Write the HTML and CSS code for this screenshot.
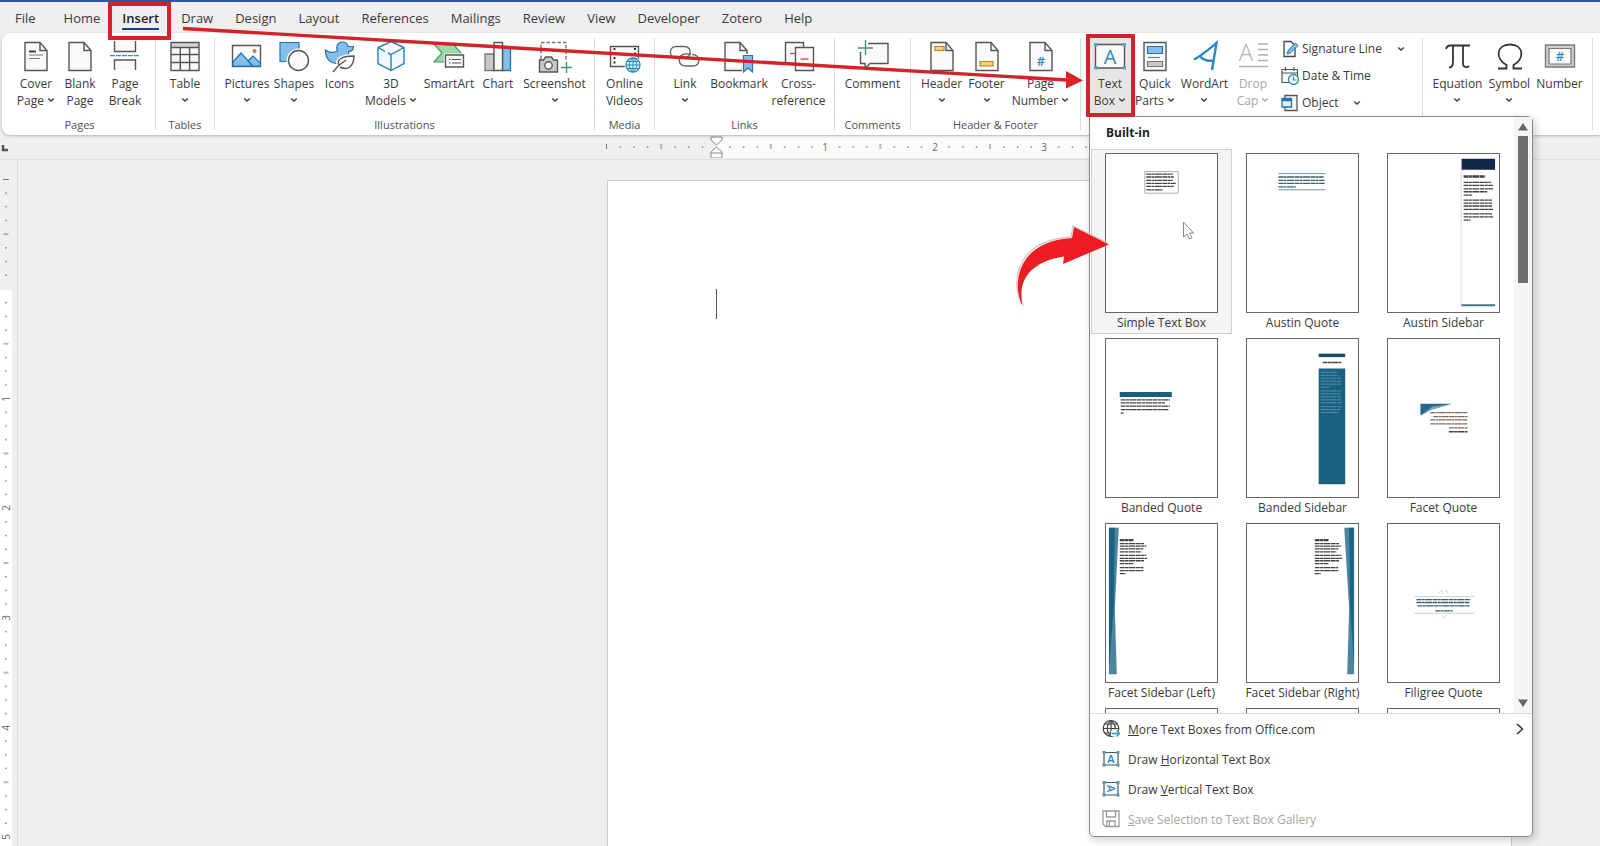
FILE: index.html
```
<!DOCTYPE html>
<html lang="en">
<head>
  <meta charset="utf-8">
  <title>Document</title>
  <link rel="stylesheet" href="styles.css">
</head>
<body>
  <svg class="defs" aria-hidden="true">
    <symbol id="chev" viewBox="0 0 8 6"><path d="M1.2 1.4l2.8 2.6 2.8-2.6" fill="none" stroke="currentColor" stroke-width="1.3"/></symbol>
    <symbol id="doc" viewBox="0 0 32 32"><path d="M5 2.5h15l7 8v20H5z" fill="#fafafa" stroke="#555" stroke-width="1.4"/><path d="M20 2.5v8h7" fill="none" stroke="#555" stroke-width="1.4"/></symbol>
    <pattern id="ticks-x" x="606.4" y="0" width="109.6" height="22" patternUnits="userSpaceOnUse">
      <path d="M54.8 8v5" stroke="#777"/>
      <path d="M13.2 11h1.4M26.9 11h1.4M40.6 11h1.4M68 11h1.4M81.7 11h1.4M95.4 11h1.4" stroke="#777" stroke-width="1.4"/>
    </pattern>
    <pattern id="ticks-y" x="0" y="19.4" width="12" height="109.6" patternUnits="userSpaceOnUse">
      <path d="M3.5 54.8h5" stroke="#777"/>
      <path d="M6 13v1.4M6 26.7v1.4M6 40.4v1.4M6 67.8v1.4M6 81.5v1.4M6 95.2v1.4" stroke="#777" stroke-width="1.4"/>
    </pattern>
  </svg>

  <nav class="tabs">
    <button class="tab file">File</button>
    <button class="tab">Home</button>
    <button class="tab active">Insert</button>
    <button class="tab">Draw</button>
    <button class="tab">Design</button>
    <button class="tab">Layout</button>
    <button class="tab">References</button>
    <button class="tab">Mailings</button>
    <button class="tab">Review</button>
    <button class="tab">View</button>
    <button class="tab">Developer</button>
    <button class="tab">Zotero</button>
    <button class="tab">Help</button>
  </nav>

  <div class="ribbon">
    <section class="group pages">
      <div class="tools">
        <button class="tool">
          <svg class="icon" viewBox="0 0 32 32"><use href="#doc"/><path d="M9 11.5h7" stroke="#444" stroke-width="2"/><path d="M9 15h14M9 18.5h11" stroke="#777" stroke-width="1.2"/></svg>
          <span>Cover<br>Page <svg class="chev"><use href="#chev"/></svg></span>
        </button>
        <button class="tool">
          <svg class="icon" viewBox="0 0 32 32"><use href="#doc"/></svg>
          <span>Blank<br>Page</span>
        </button>
        <button class="tool">
          <svg class="icon" viewBox="0 0 32 32"><path d="M5.5 1v10.5h21V1M5.5 30V20h21v10" fill="#fafafa" stroke="#555" stroke-width="1.4"/><path d="M1 15.7h30" stroke="#2f8fc0" stroke-width="1.3" stroke-dasharray="5 1"/></svg>
          <span>Page<br>Break</span>
        </button>
      </div>
      <div class="group-name">Pages</div>
    </section>

    <section class="group tables">
      <div class="tools">
        <button class="tool">
          <svg class="icon" viewBox="0 0 32 32"><path d="M2 2.5h28v28H2z" fill="#fafafa"/><path d="M2 2.5h28v5H2z" fill="#d4d4d4"/><path d="M2 2.5h28v28H2zM2 7.500h28M2 14.500h28M2 22.500h28M11.300 7.500v23M20.600 7.500v23" fill="none" stroke="#555" stroke-width="1.4"/></svg>
          <span>Table<br><svg class="chev"><use href="#chev"/></svg></span>
        </button>
      </div>
      <div class="group-name">Tables</div>
    </section>

    <section class="group illustrations">
      <div class="tools">
        <button class="tool">
          <svg class="icon" viewBox="0 0 32 32"><path d="M1.500 5.500h28v21h-28z" fill="#fafafa" stroke="#555" stroke-width="1.4"/><path d="M2 22l8-9 12 13.200H2zM17 21l5-5 7.300 7v3.200h-8z" fill="#83beec" stroke="#2573ab" stroke-width="1.2"/><circle cx="23.5" cy="11" r="2" fill="#d9782d"/></svg>
          <span>Pictures<br><svg class="chev"><use href="#chev"/></svg></span>
        </button>
        <button class="tool">
          <svg class="icon" viewBox="0 0 32 32"><path d="M2 2.500h19v19H2z" fill="#83beec" stroke="#2573ab" stroke-width="1.2"/><circle cx="20.5" cy="20.5" r="12" fill="#fff"/><circle cx="20.5" cy="20.5" r="10" fill="#fafafa" stroke="#555" stroke-width="1.4"/></svg>
          <span>Shapes<br><svg class="chev"><use href="#chev"/></svg></span>
        </button>
        <button class="tool">
          <svg class="icon" viewBox="0 0 32 32"><path d="M1.500 10c4 3 8 3 12 1-2-4 0-9 5-9 3 0 5 2 5.500 4.500h5.500c0 3-2 5-5 5 1 7-3 12-11 12-8 0-12-5-12-13.500z" fill="#83beec" stroke="#2573ab" stroke-width="1.2"/><path d="M15 25c-3-6 4-9 15-9 0 10-6 15-14 11" fill="#fff" stroke="#fff" stroke-width="4"/><path d="M9 32l6-7c-3-6 4-9 15-9 0 10-6 15-14 11M14 26l8-6" fill="#fff" stroke="#555" stroke-width="1.4"/></svg>
          <span>Icons</span>
        </button>
        <button class="tool">
          <svg class="icon" viewBox="0 0 32 32"><path d="M16 1.500l13 6v16l-13 7-13-7v-16z" fill="#f1fafd" stroke="#2b7fae" stroke-width="1.4"/><path d="M3 7.500l7 4M13 13l3 1.500 13-7M16 14.500v16" fill="none" stroke="#2b7fae" stroke-width="1.4"/></svg>
          <span>3D<br>Models <svg class="chev"><use href="#chev"/></svg></span>
        </button>
        <button class="tool">
          <svg class="icon" viewBox="0 0 32 32"><path d="M1 4h19l8 9-8 9H1l8-9z" fill="#98dba8" stroke="#4a9a61" stroke-width="1.2"/><path d="M11 13.500h21v15H11z" fill="#fff"/><path d="M12.500 15h18v12h-18z" fill="#fafafa" stroke="#555" stroke-width="1.4"/><path d="M16 19.500h1.500M19 19.500h9M16 23h1.500M19 23h9" stroke="#555" stroke-width="1.2"/></svg>
          <span>SmartArt</span>
        </button>
        <button class="tool">
          <svg class="icon" viewBox="0 0 32 32"><path d="M3 14h9v16.500H3z" fill="#c8c8c8" stroke="#777" stroke-width="1.3"/><path d="M20.500 8h8v22.500h-8z" fill="#83beec" stroke="#2573ab" stroke-width="1.3"/><path d="M12 2.500h8.500v28H12z" fill="#fafafa" stroke="#555" stroke-width="1.4"/></svg>
          <span>Chart</span>
        </button>
        <button class="tool">
          <svg class="icon wide" viewBox="0 0 36 32"><path d="M4 19V2.500h25V20" fill="none" stroke="#777" stroke-width="1.4" stroke-dasharray="3.5 2"/><path d="M2.500 20h4l2-3h6l2 3h4v12h-18z" fill="#c8c8c8" stroke="#555" stroke-width="1.4"/><circle cx="11.500" cy="25.500" r="3.7" fill="#fafafa" stroke="#555" stroke-width="1.4"/><path d="M29.500 22v11M24 27.500h11" stroke="#3f9b66" stroke-width="1.4"/></svg>
          <span>Screenshot<br><svg class="chev"><use href="#chev"/></svg></span>
        </button>
      </div>
      <div class="group-name">Illustrations</div>
    </section>

    <section class="group media">
      <div class="tools">
        <button class="tool">
          <svg class="icon" viewBox="0 0 32 32"><path d="M2.500 6.500h28v20h-28z" fill="#fafafa" stroke="#555" stroke-width="1.4"/><path d="M6.500 8v18M27 8v8" stroke="#333" stroke-width="2" stroke-dasharray="2 2.5"/><circle cx="25" cy="25" r="8.5" fill="#fff"/><circle cx="25" cy="25" r="7" fill="#d9f0fa" stroke="#2e87b5" stroke-width="1.3"/><path d="M18 25h14M19.500 21.500h11M19.500 28.500h11M25 18v14M25 18c-5 4-5 10 0 14M25 18c5 4 5 10 0 14" fill="none" stroke="#2e87b5"/></svg>
          <span>Online<br>Videos</span>
        </button>
      </div>
      <div class="group-name">Media</div>
    </section>

    <section class="group links">
      <div class="tools">
        <button class="tool">
          <svg class="icon" viewBox="0 0 32 32"><g fill="none" stroke="#666" stroke-width="1.4"><path d="M7 18c-8-1-7-11.500 0-11.500h8c7 0 8 8 3 10.500"/><path d="M23 14.500c9 0 9 11.500 1 11.500h-7c-8 0-9-9-3-11.500 2-1 7-.5 8 0"/></g></svg>
          <span>Link<br><svg class="chev"><use href="#chev"/></svg></span>
        </button>
        <button class="tool">
          <svg class="icon" viewBox="0 0 32 32"><use href="#doc" x="-3"/><path d="M19 14h13v19H19z" fill="#fff"/><path d="M20.500 15.500h9V32L25 28l-4.500 4z" fill="#83beec" stroke="#2573ab" stroke-width="1.2"/></svg>
          <span>Bookmark</span>
        </button>
        <button class="tool">
          <svg class="icon" viewBox="0 0 32 32"><path d="M2.500 2.500h18v21h-18z" fill="#fafafa" stroke="#555" stroke-width="1.4"/><path d="M7 13.500h5" stroke="#c9474c" stroke-width="1.3"/><path d="M12.500 7.500h18v23h-18z" fill="#fafafa" stroke="#555" stroke-width="1.4"/><path d="M17.500 19h8" stroke="#c9474c" stroke-width="1.3"/></svg>
          <span>Cross-<br>reference</span>
        </button>
      </div>
      <div class="group-name">Links</div>
    </section>

    <section class="group comments">
      <div class="tools">
        <button class="tool">
          <svg class="icon" viewBox="0 0 32 32"><path d="M11 3.500h20v20H13l-5 5v-5H3.500V12" fill="#fafafa" stroke="#555" stroke-width="1.4"/><path d="M2 8h14M8.500 1v14" stroke="#fff" stroke-width="5"/><path d="M1 8h15M8.500 0v15" stroke="#3f9b66" stroke-width="1.4"/></svg>
          <span>Comment</span>
        </button>
      </div>
      <div class="group-name">Comments</div>
    </section>

    <section class="group header-footer">
      <div class="tools">
        <button class="tool">
          <svg class="icon" viewBox="0 0 32 32"><use href="#doc"/><path d="M9 6.500h9v4H9z" fill="#f9cf77" stroke="#c67e22" stroke-width="1.2"/></svg>
          <span>Header<br><svg class="chev"><use href="#chev"/></svg></span>
        </button>
        <button class="tool">
          <svg class="icon" viewBox="0 0 32 32"><use href="#doc"/><path d="M9 21.500h13v4.500H9z" fill="#f9cf77" stroke="#c67e22" stroke-width="1.2"/></svg>
          <span>Footer<br><svg class="chev"><use href="#chev"/></svg></span>
        </button>
        <button class="tool">
          <svg class="icon" viewBox="0 0 32 32"><use href="#doc"/><text class="hash" x="16" y="26">#</text></svg>
          <span>Page<br>Number <svg class="chev"><use href="#chev"/></svg></span>
        </button>
      </div>
      <div class="group-name">Header &amp; Footer</div>
    </section>

    <section class="group text">
      <div class="tools">
        <button class="tool open">
          <svg class="icon" viewBox="0 0 32 32"><path d="M1.500 4.500h29v23.500h-29z" fill="#fafafa" stroke="#555" stroke-width="1.4"/><path d="M0 3h3.500v3.500H0zM28.500 3H32v3.500h-3.500zM0 26h3.500v3.500H0zM28.500 26H32v3.500h-3.500z" fill="#5ea3ca"/><text class="letter" x="16" y="23.500">A</text></svg>
          <span>Text<br>Box <svg class="chev"><use href="#chev"/></svg></span>
        </button>
        <button class="tool">
          <svg class="icon" viewBox="0 0 32 32"><path d="M5 2.500h22v28H5z" fill="#fafafa" stroke="#555" stroke-width="1.4"/><path d="M8.500 6.500h15v7h-15z" fill="#83beec" stroke="#2573ab" stroke-width="1.2"/><path d="M9 17.500h12" stroke="#777" stroke-width="1.2"/><path d="M8.500 21.500h15v5h-15z" fill="#c8c8c8" stroke="#777" stroke-width="1.2"/></svg>
          <span>Quick<br>Parts <svg class="chev"><use href="#chev"/></svg></span>
        </button>
        <button class="tool">
          <svg class="icon" viewBox="0 0 32 32"><path d="M5 19.500C12 16 20 9 27.500 3L23 30M10.500 15.500C13 19 18 21.500 24.500 20.500" fill="none" stroke="#2b88bd" stroke-width="2.4"/></svg>
          <span>WordArt<br><svg class="chev"><use href="#chev"/></svg></span>
        </button>
        <button class="tool" disabled>
          <svg class="icon" viewBox="0 0 32 32"><text class="drop" x="9" y="21">A</text><path d="M21 4h10M21 9.500h10M21 15h10M21 20.500h10M2 26.500h29" stroke="#b0b0b0" stroke-width="1.3"/></svg>
          <span>Drop<br>Cap <svg class="chev"><use href="#chev"/></svg></span>
        </button>
        <div class="stack">
          <button class="row-tool">
            <svg class="small-icon" viewBox="0 0 18 18"><path d="M3 1.500h7l4 4v11H3z" fill="#fafafa" stroke="#444" stroke-width="1.3"/><path d="M6 14l1.500-4 7-7 2.500 2.500-7 7z" fill="#83beec" stroke="#2573ab"/></svg>
            Signature Line <svg class="chev"><use href="#chev"/></svg>
          </button>
          <button class="row-tool">
            <svg class="small-icon" viewBox="0 0 18 18"><path d="M1 2.500h15.500v13H1zM1 6h15.500M4.500 0v4M13 0v4" fill="#fafafa" stroke="#555" stroke-width="1.2"/><circle cx="12.5" cy="12.5" r="5" fill="#e8f6fb" stroke="#3b8bae" stroke-width="1.3"/><path d="M12.500 9.500v3.500h3" fill="none" stroke="#3b8bae" stroke-width="1.2"/></svg>
            Date &amp; Time
          </button>
          <button class="row-tool">
            <svg class="small-icon" viewBox="0 0 18 18"><path d="M4 1.500h12v15H4z" fill="#fafafa" stroke="#555" stroke-width="1.3"/><path d="M1 4.500h9.500v8.500H1z" fill="#d9effa" stroke="#2573ab" stroke-width="1.3"/><path d="M1 6h9.500" stroke="#2573ab" stroke-width="2.5"/></svg>
            Object <svg class="chev"><use href="#chev"/></svg>
          </button>
        </div>
      </div>

      <div class="menu">
        <div class="gallery">
          <div class="gallery-main">
            <h2 class="gallery-title">Built-in</h2>
            <div class="cells">
              <button class="cell hover">
                <svg class="thumb" viewBox="0 0 113 159"><path d="M39.500 17h34v22h-34z" fill="#fff" stroke="#aaa"/><g class="lines"><path d="M41 19.500h27M41 22.500h28M41 26h27M41 29h30M41 32h28M41 35.500h17"/></g></svg>
                <span>Simple Text Box</span>
              </button>
              <button class="cell">
                <svg class="thumb" viewBox="0 0 113 159"><path d="M32 19h48M32 35.500h48" stroke="#6c9aa8"/><g class="lines teal"><path d="M32 22.500h46M32 26h47M32 29h47M32 32.500h18"/></g></svg>
                <span>Austin Quote</span>
              </button>
              <button class="cell">
                <svg class="thumb" viewBox="0 0 113 159"><path d="M74.500 4v151" stroke="#ddd"/><path d="M75 4h34v11H75z" fill="#12284a"/><path d="M75 153h34" stroke="#3f7686" stroke-width="2"/><g class="lines"><path d="M77 22h22" stroke-width="2.5"/><path d="M77 28h28M77 31h30M77 34.500h30M77 37.500h24M77 41h9M77 46h29M77 49h29M77 52h29M77 55.500h30M77 60h29M77 63h30M77 66.500h7"/></g></svg>
                <span>Austin Sidebar</span>
              </button>
              <button class="cell">
                <svg class="thumb" viewBox="0 0 113 159"><path d="M14 53h53v5H14z" fill="#195f7b"/><g class="lines"><path d="M15 61h50M15 64h45M15 67.500h50M15 71h49M15 74.500h3"/></g></svg>
                <span>Banded Quote</span>
              </button>
              <button class="cell">
                <svg class="thumb" viewBox="0 0 113 159"><path d="M73 14h27v3.500H73z" fill="#175068"/><path d="M73 29h27v118H73z" fill="#17607f"/><g class="lines"><path d="M77 23h19"/></g><g class="lines pale"><path d="M75 33h17M75 36h18M75 39h21M75 42h22M75 45h21M75 48h9M75 52h21M75 55h20M75 58h21M75 61h21M75 64h22M75 68h22M75 71h20M75 74h18"/></g></svg>
                <span>Banded Sidebar</span>
              </button>
              <button class="cell">
                <svg class="thumb" viewBox="0 0 113 159"><path d="M33 65h32L44 71l-11 6z" fill="#28668f"/><path d="M65 65L44 71l-11 6 12-9z" fill="#7fa3bb"/><g class="lines brown"><path d="M43 74h38M46 78h35M43 81.500h38M43 85.500h38M62 89.500h19"/></g><g class="lines"><path d="M62 93.500h19"/></g></svg>
                <span>Facet Quote</span>
              </button>
              <button class="cell">
                <svg class="thumb" viewBox="0 0 113 159"><path d="M3 3h10L9 85l2 67H3z" fill="#4d85a0"/><path d="M3 3h6l-1 82-5 60z" fill="#1b6482"/><g class="lines"><path d="M14 15.500h14" stroke-width="2.5"/><path d="M14 19h25M14 21.500h27M14 24.500h24M14 27.500h22M14 31h27M14 34h28M14 36.500h25M14 39.500h14M14 43.500h24M14 46.500h24M14 49.500h6"/></g></svg>
                <span>Facet Sidebar (Left)</span>
              </button>
              <button class="cell">
                <svg class="thumb" viewBox="0 0 113 159"><path d="M109 3H99l5 82-2 67h7z" fill="#4d85a0"/><path d="M109 3h-5l1 82 4 60z" fill="#1b6482"/><g class="lines"><path d="M69 15.500h14" stroke-width="2.5"/><path d="M69 19h25M69 21.500h27M69 24.500h24M69 27.500h22M69 31h27M69 34h28M69 36.500h25M69 39.500h14M69 43.500h24M69 46.500h24M69 49.500h6"/></g></svg>
                <span>Facet Sidebar (Right)</span>
              </button>
              <button class="cell">
                <svg class="thumb" viewBox="0 0 113 159"><path d="M27 73h61M27 90h61M52 70c1-4 4-4 4 0M58 66c1 0 2 2 3 4M55 93l2 2 2-3" fill="none" stroke="#c6d0d0"/><g class="lines teal"><path d="M29 76h55M29 79h54M30 82.500h53M48 87.500h18"/></g></svg>
                <span>Filigree Quote</span>
              </button>
              <button class="cell"><svg class="thumb" viewBox="0 0 113 159"></svg></button>
              <button class="cell"><svg class="thumb" viewBox="0 0 113 159"></svg></button>
              <button class="cell"><svg class="thumb" viewBox="0 0 113 159"></svg></button>
            </div>
          </div>
          <div class="scrollbar">
            <svg class="scroll-arrow" viewBox="0 0 10 8"><path d="M5 0l5 7.500H0z" fill="#666"/></svg>
            <div class="scroll-thumb"></div>
            <svg class="scroll-arrow end" viewBox="0 0 10 8"><path d="M5 8L0 .5h10z" fill="#666"/></svg>
          </div>
        </div>
        <div class="menu-items">
          <button class="menu-item">
            <svg class="small-icon" viewBox="0 0 18 18"><g fill="none" stroke="#444" stroke-width="1.2"><circle cx="9" cy="8.5" r="7.8"/><path d="M9 .7v15.600M1 8.500h16M2.500 4h13M2.500 13h8M9 .7c-5 4-5 11 0 15.600M9 .7c4 3 4.500 7 4 9"/></g><path d="M9 11h9v5H9z" fill="#fff"/><path d="M9.500 13.500h8M14.500 10.500l3 3-3 3" fill="none" stroke="#2f9cc4" stroke-width="1.5"/></svg>
            <span><u>M</u>ore Text Boxes from Office.com</span>
            <svg class="more" viewBox="0 0 8 12"><path d="M1 1l5.500 5L1 11" fill="none" stroke="#333" stroke-width="1.5"/></svg>
          </button>
          <button class="menu-item">
            <svg class="small-icon" viewBox="0 0 18 18"><path d="M2 2.500h14v12.500H2z" fill="#f4fafc" stroke="#555" stroke-width="1.2"/><path d="M.5 1h3v3h-3zM14.500 1h3v3h-3zM.5 13.500h3v3h-3zM14.500 13.500h3v3h-3z" fill="#4f9cb8"/><text class="mini" x="9" y="12.500">A</text></svg>
            <span>Draw <u>H</u>orizontal Text Box</span>
          </button>
          <button class="menu-item">
            <svg class="small-icon" viewBox="0 0 18 18"><path d="M2 2.500h14v12.500H2z" fill="#f4fafc" stroke="#555" stroke-width="1.2"/><path d="M.5 1h3v3h-3zM14.500 1h3v3h-3zM.5 13.500h3v3h-3zM14.500 13.500h3v3h-3z" fill="#4f9cb8"/><text class="mini" x="9" y="12.500" transform="rotate(90 9 8.7)">A</text></svg>
            <span>Draw <u>V</u>ertical Text Box</span>
          </button>
          <button class="menu-item" disabled>
            <svg class="small-icon" viewBox="0 0 18 18"><path d="M1 1h16v15.500H3.500L1 14zM4.500 1v6h9V1M5 16.500V11h8v5.500M7.500 11v5.500" fill="none" stroke="#999" stroke-width="1.3"/></svg>
            <span><u>S</u>ave Selection to Text Box Gallery</span>
          </button>
        </div>
      </div>
    </section>

    <section class="group symbols">
      <div class="tools">
        <button class="tool">
          <svg class="icon" viewBox="0 0 32 32"><path d="M4 9c1-3 2-3.500 4-3.500h20M11 5.500v16c0 4-1 6-4 6M21 5.500v18c0 4 4 4.500 6 2.500" fill="none" stroke="#333" stroke-width="1.8"/></svg>
          <span>Equation<br><svg class="chev"><use href="#chev"/></svg></span>
        </button>
        <button class="tool">
          <svg class="icon" viewBox="0 0 32 32"><path d="M4 28.500h8.500v-3.500C1 19 2 4.500 16 4.500S31 19 19.500 25v3.500H28" fill="none" stroke="#333" stroke-width="1.8"/></svg>
          <span>Symbol<br><svg class="chev"><use href="#chev"/></svg></span>
        </button>
        <button class="tool">
          <svg class="icon" viewBox="0 0 32 32"><path d="M1.500 5h29v22h-29z" fill="#cdcdcd" stroke="#777" stroke-width="1.4"/><path d="M5 8.500h22V24H5z" fill="#fafafa" stroke="#777" stroke-width="1.2"/><text class="hash" x="16" y="21">#</text></svg>
          <span>Number</span>
        </button>
      </div>
    </section>
  </div>

  <div class="ruler">
    <svg class="ruler-x" width="1600" height="22">
      <rect x="716" y="0" width="796" height="22" fill="#fbfbfb"/>
      <rect x="606" y="0" width="904" height="22" fill="url(#ticks-x)"/>
      <path d="M606.500 8v5" stroke="#777"/>
      <path d="M3 9v5h5" stroke="#555" stroke-width="2.5" fill="none"/>
      <text x="825" y="15">1</text>
      <text x="935" y="15">2</text>
      <text x="1044" y="15">3</text>
      <path d="M711 1h11v3l-5.500 5-5.500-5zM711 22v-6l5.500-5 5.500 5v6zM711 17h11" fill="#fff" stroke="#888"/>
    </svg>
  </div>

  <main class="workspace">
    <svg class="ruler-y" width="18" height="690">
      <rect x="0" y="130" width="12" height="560" fill="#fff"/>
      <rect x="0" y="19" width="12" height="671" fill="url(#ticks-y)"/>
      <path d="M3 19.500h6" stroke="#777"/>
      <text transform="translate(10 239) rotate(-90)">1</text>
      <text transform="translate(10 348) rotate(-90)">2</text>
      <text transform="translate(10 458) rotate(-90)">3</text>
      <text transform="translate(10 568) rotate(-90)">4</text>
      <text transform="translate(10 677) rotate(-90)">5</text>
    </svg>
    <article class="page"><div class="caret"></div></article>
  </main>

  <!-- callouts drawn over the window -->
  <svg class="callouts" width="1600" height="320">
    <g fill="none" stroke="#d2232a" stroke-width="4">
      <rect x="110" y="4" width="59" height="34"/>
      <rect x="1088" y="36" width="45" height="79"/>
      <path d="M183 28.500L1067 80" stroke-width="3.4"/>
    </g>
    <path d="M1066 71l17 9.500-17 8z" fill="#e01f26"/>
    <path d="M1022 304C1012 288 1011 241 1071 237l2-11 35 17" fill="none" stroke="#d3cccc" stroke-width="1.5"/>
    <path d="M1023 306C1013 290 1012 242 1072 238l2-11 35 17.500-46 19.500 1-7.500C1046 259 1014 270 1023 306z" fill="#ed1c24"/>
    <path d="M1183.500 222v15l3.500-3 2.500 5 2.500-1.200-2.500-4.800h4z" fill="#fff" stroke="#888"/>
  </svg>
</body>
</html>
```
FILE: styles.css
```
* {
  margin: 0;
  padding: 0;
  box-sizing: border-box;
}

body {
  height: 100vh;
  display: flex;
  flex-direction: column;
  position: relative;
  overflow: hidden;
  font-family: "Open Sans", "Noto Sans", sans-serif;
  font-size: 12px;
  color: #3a3a3a;
  background: #efefef;
}

button {
  font: inherit;
  color: inherit;
  background: none;
  border: none;
}

svg {
  display: block;
}

.defs {
  position: absolute;
  width: 0;
  height: 0;
}

/* tabs */
.tabs {
  display: flex;
  flex: none;
  height: 33px;
  padding-left: 5px;
  border-top: 2px solid #2f559f;
}

.tab {
  padding: 0 10px;
  margin-right: 2px;
  font-size: 13px;
  line-height: 32px;
}

.tab.file {
  margin-right: 8px;
}

.tab.active {
  font-weight: 600;
  color: #222;
  background: linear-gradient(#1f3a86, #1f3a86) center 26px / 37px 2px no-repeat;
}

/* ribbon */
.ribbon {
  display: flex;
  flex: none;
  height: 102px;
  margin-left: 2px;
  padding-left: 2px;
  background: #fff;
  border-radius: 8px 0 0 8px;
  box-shadow: 0 1px 3px rgba(0, 0, 0, 0.25);
  position: relative;
  z-index: 2;
}

.group {
  flex: none;
  display: flex;
  flex-direction: column;
  position: relative;
  margin: 5px 0;
  border-right: 1px solid #dcdcdc;
}

.tools {
  flex: 1;
  display: grid;
  justify-content: center;
  align-items: start;
}

.pages { width: 152px; }
.pages .tools { grid-template-columns: 44px 44px 46px; padding-left: 3px; }
.tables { width: 59px; }
.illustrations { width: 380px; }
.illustrations .tools { grid-template-columns: 48px 46px 45px 58px 58px 40px 73px; padding-left: 5px; }
.media { width: 60px; }
.links { width: 180px; }
.links .tools { grid-template-columns: 44px 64px 55px; }
.comments { width: 76px; }
.header-footer { width: 170px; }
.header-footer .tools { grid-template-columns: 44px 46px 62px; }
.text { width: 342px; }
.text .tools { grid-template-columns: 48px 42px 57px 40px 1fr; padding-left: 5px; justify-content: stretch; }
.symbols { width: 170px; }
.symbols .tools { grid-template-columns: 52px 52px 48px; }

.tool {
  display: flex;
  flex-direction: column;
  align-items: center;
  gap: 3px;
  padding-top: 2px;
  line-height: 17px;
  white-space: nowrap;
}

.tool.open {
  height: 78px;
  background: #e6e6e6;
}

.tool:disabled,
.menu-item:disabled {
  color: #a6a6a6;
}

.icon {
  width: 32px;
  height: 32px;
  overflow: visible;
}

.icon.wide {
  width: 36px;
}

.chev {
  display: inline-block;
  width: 8px;
  height: 6px;
  vertical-align: 2px;
}

.group-name {
  font-size: 11px;
  line-height: 10px;
  text-align: center;
  color: #505050;
}

.stack {
  display: flex;
  flex-direction: column;
  align-items: start;
  margin-top: -3px;
  padding-left: 8px;
}

.row-tool {
  display: flex;
  align-items: center;
  gap: 3px;
  height: 27px;
}

.row-tool .chev {
  margin-left: 12px;
}

.small-icon {
  flex: none;
  width: 18px;
  height: 18px;
}

.hash,
.letter,
.drop,
.mini {
  fill: #2b88bd;
  text-anchor: middle;
}

.hash { font-size: 13px; font-weight: 600; }
.letter { font-size: 20px; }
.drop { font-size: 24px; font-weight: 300; fill: #b0b0b0; }
.mini { font-size: 11px; font-weight: 600; }

/* text box menu */
.menu {
  position: absolute;
  top: 78px;
  left: 8px;
  width: 444px;
  background: #fff;
  border: 1px solid #8a8a8a;
  border-radius: 0 5px 5px 5px;
  box-shadow: 2px 3px 8px rgba(0, 0, 0, 0.2);
}

.gallery {
  display: flex;
  height: 597px;
  overflow: hidden;
  border-bottom: 1px solid #dadada;
}

.gallery-main {
  flex: 1;
  padding-left: 1px;
}

.gallery-title {
  padding-left: 15px;
  font-size: 12px;
  line-height: 32px;
  color: #222;
}

.cells {
  display: grid;
  grid-template-columns: repeat(3, 141px);
  grid-auto-rows: 185px;
}

.cell {
  display: flex;
  flex-direction: column;
  align-items: center;
  padding-top: 3px;
  border: 1px solid transparent;
  line-height: 20px;
  white-space: nowrap;
}

.cell.hover {
  background: #f4f4f4;
  border-color: #d0d0d0;
}

.thumb {
  flex: none;
  width: 113px;
  height: 160px;
  background: #fff;
  border: 1px solid #666;
}

.lines {
  fill: none;
  stroke: #444;
  stroke-width: 1.3;
  stroke-dasharray: 5 0.4 3 0.4 7 0.5;
}

.lines.teal { stroke: #36606b; }
.lines.pale { stroke: #5d92ab; stroke-width: 1; }
.lines.brown { stroke: #86695c; }

.scrollbar {
  width: 19px;
  display: flex;
  flex-direction: column;
  align-items: center;
  gap: 5px;
  padding: 6px 0;
  background: #f5f5f5;
}

.scroll-arrow {
  width: 10px;
  height: 8px;
}

.scroll-arrow.end {
  margin-top: auto;
}

.scroll-thumb {
  width: 10px;
  height: 147px;
  background: #6e6e6e;
}

.menu-items {
  padding-bottom: 2px;
}

.menu-item {
  display: flex;
  align-items: center;
  gap: 8px;
  width: 100%;
  height: 30px;
  padding: 0 8px 0 12px;
}

.more {
  width: 8px;
  height: 12px;
  margin-left: auto;
}

/* document */
.ruler {
  flex: none;
  height: 25px;
  padding-top: 1px;
  border-bottom: 1px solid #dedede;
}

.ruler text,
.ruler-y text {
  font-size: 10px;
  text-anchor: middle;
  fill: #666;
}

.workspace {
  flex: 1;
  min-height: 0;
  display: flex;
  overflow: hidden;
}

.ruler-y {
  flex: none;
  border-right: 1px solid #dcdcdc;
}

.page {
  width: 905px;
  margin: 20px 0 0 589px;
  padding: 108px;
  background: #fff;
  border: 1px solid #cbcbcb;
  border-bottom: none;
}

.caret {
  width: 1px;
  height: 30px;
  background: #555;
}

.callouts {
  position: absolute;
  top: 0;
  left: 0;
  z-index: 3;
  pointer-events: none;
}
```
